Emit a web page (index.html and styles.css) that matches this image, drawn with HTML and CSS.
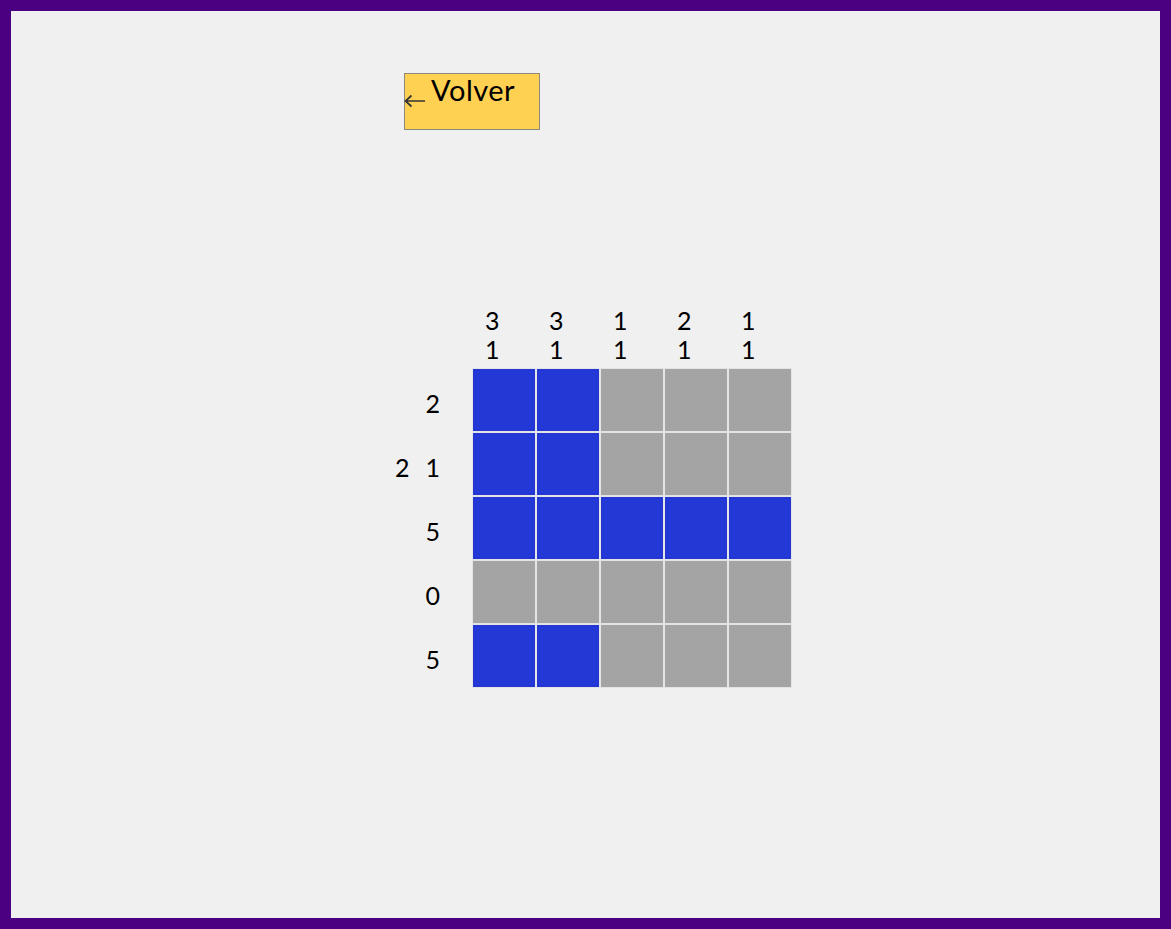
FILE: index.html
```html
<!DOCTYPE html>
<html lang="es">
<head>
<meta charset="utf-8">
<title>Nonograma</title>
<link rel="stylesheet" href="styles.css">
</head>
<body>
<div class="frame">
  <div class="content">
    <button class="back">
      <svg class="arrow" width="22" height="14" viewBox="0 0 22 14"><path d="M21 7H1.5M7.5 1.5L1.5 7l6 5.5" fill="none" stroke="#333" stroke-width="1.7"/></svg>
      <span class="back-label">Volver</span>
    </button>
    <div class="puzzle">
      <div class="corner"></div>
      <div class="col-clue"><span>3</span><span>1</span></div>
      <div class="col-clue"><span>3</span><span>1</span></div>
      <div class="col-clue"><span>1</span><span>1</span></div>
      <div class="col-clue"><span>2</span><span>1</span></div>
      <div class="col-clue"><span>1</span><span>1</span></div>

      <div class="row-clue"><span>2</span></div>
      <div class="cell on"></div><div class="cell on"></div><div class="cell"></div><div class="cell"></div><div class="cell"></div>

      <div class="row-clue"><span>2</span><span>1</span></div>
      <div class="cell on"></div><div class="cell on"></div><div class="cell"></div><div class="cell"></div><div class="cell"></div>

      <div class="row-clue"><span>5</span></div>
      <div class="cell on"></div><div class="cell on"></div><div class="cell on"></div><div class="cell on"></div><div class="cell on"></div>

      <div class="row-clue"><span>0</span></div>
      <div class="cell"></div><div class="cell"></div><div class="cell"></div><div class="cell"></div><div class="cell"></div>

      <div class="row-clue"><span>5</span></div>
      <div class="cell on"></div><div class="cell on"></div><div class="cell"></div><div class="cell"></div><div class="cell"></div>
    </div>
  </div>
</div>
</body>
</html>
```
FILE: styles.css
```css
html, body {
  margin: 0;
  padding: 0;
}
body {
  font-family: Lato, "Open Sans", sans-serif;
  color: #000;
}
.frame {
  box-sizing: border-box;
  width: 1171px;
  height: 929px;
  border: 11px solid #4b0082;
  background: #f0f0f0;
}
.content {
  padding: 62px 0 0 393px;
}
.back {
  display: flex;
  align-items: flex-start;
  box-sizing: border-box;
  width: 136px;
  height: 57px;
  padding: 0;
  margin: 0;
  background: #ffd152;
  border: 1px solid #8c8a80;
  font-family: Lato, "Open Sans", sans-serif;
  cursor: pointer;
}
.arrow {
  display: block;
  margin-top: 20px;
  margin-left: -1px;
  flex: none;
}
.back-label {
  display: block;
  font-size: 29px;
  line-height: 34px;
  margin-left: 5px;
  margin-top: -1px;
  letter-spacing: 0.5px;
  color: #000;
}
.puzzle {
  display: grid;
  grid-template-columns: 68px repeat(5, 64px);
  grid-template-rows: 60px repeat(5, 64px);
  margin-top: 178px;
  font-size: 25px;
}
.col-clue {
  display: flex;
  flex-direction: column;
  justify-content: flex-end;
  line-height: 29px;
  padding-left: 13px;
  padding-bottom: 4px;
}
.col-clue span {
  display: block;
  width: 12px;
  text-align: center;
}
.row-clue {
  display: flex;
  align-items: center;
  justify-content: flex-end;
  gap: 16px;
  padding-right: 32px;
  padding-top: 6px;
}
.cell {
  box-sizing: border-box;
  border: 1px solid #e4e4e4;
  background: #a3a4a3;
}
.cell.on {
  background: #2338d5;
}
```
